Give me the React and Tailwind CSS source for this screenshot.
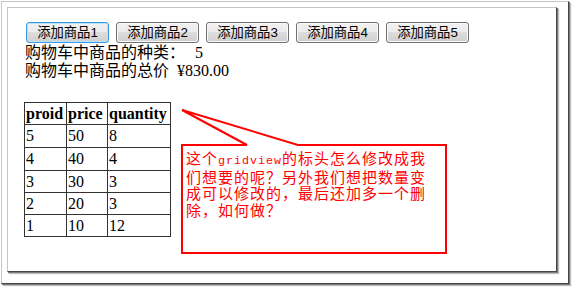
export default function App() {
  const btns = [1, 2, 3, 4, 5];
  const head = ["proid", "price", "quantity"];
  const rows = [
    ["5", "50", "8"],
    ["4", "40", "4"],
    ["3", "30", "3"],
    ["2", "20", "3"],
    ["1", "10", "12"],
  ];
  return (
    <div className="relative w-[572px] h-[287px] bg-white pl-[1px] pt-[1px] overflow-hidden">
      <div className="w-[568px] h-[283px] bg-white border border-[#c6c6c6] border-r-[#444444] border-b-[#444444] shadow-[1px_1px_0_#7a7a7a,2px_2px_1px_#bdbdbd] pl-[5px] pt-[5px]">
        <div className="w-[550px] h-[265px] bg-white border border-[#c6c6c6] border-r-[#444444] border-b-[#444444] shadow-[1px_1px_0_#7a7a7a,2px_2px_1px_#bdbdbd] pl-[16px] pt-[14px]">
          <div className="flex gap-[7px] ml-[2px]">
            {btns.map((n) => (
              <button
                key={n}
                className={
                  n === 1
                    ? "w-[83px] h-[21px] rounded-[3px] border border-[#3c9be0] shadow-[inset_0_0_0_1px_#b8e2f8] bg-[linear-gradient(#f2f2f2_0%,#ebebeb_49%,#dddddd_50%,#cfcfcf_100%)] text-[13.33px] leading-none text-black font-['Liberation_Sans','Noto_Sans_CJK_SC',sans-serif] flex items-center justify-center"
                    : "w-[83px] h-[21px] rounded-[3px] border border-[#707070] shadow-[inset_0_0_0_1px_#fafafa] bg-[linear-gradient(#f2f2f2_0%,#ebebeb_49%,#dddddd_50%,#cfcfcf_100%)] text-[13.33px] leading-none text-black font-['Liberation_Sans','Noto_Sans_CJK_SC',sans-serif] flex items-center justify-center"
                }
              >
                添加商品{n}
              </button>
            ))}
          </div>
          <div className="ml-[1px] mt-[1px] text-[16px] leading-[18px] text-black font-['Liberation_Serif','Noto_Sans_CJK_SC',serif]">
            <div>
              购物车中商品的种类：<span className="ml-[10px]">5</span>
            </div>
            <div>
              购物车中商品的总价<span className="ml-[8px]">¥830.00</span>
            </div>
          </div>
          <div className="mt-[22px] grid grid-cols-[42px_41px_63px] grid-rows-[22px_23px_23px_22px_22px_22px] w-fit border-l border-t border-[#333333] font-['Liberation_Serif',serif] text-[16px] text-black">
            {head.map((h) => (
              <div key={h} className="flex items-center pl-[1px] border-r border-b border-[#333333] font-bold">
                {h}
              </div>
            ))}
            {rows.map((r, i) =>
              r.map((c, j) => (
                <div key={i + "-" + j} className="flex items-center pl-[1px] border-r border-b border-[#333333]">
                  {c}
                </div>
              ))
            )}
          </div>
        </div>
      </div>

      <svg
        className="absolute left-0 top-0 pointer-events-none"
        width="572"
        height="287"
        viewBox="0 0 572 287"
      >
        <path
          d="M182 145 L247 145 L182 110 L298 145 L446 145 L446 253 L182 253 Z"
          fill="white"
          stroke="#ff0000"
          strokeWidth="2"
          strokeLinejoin="miter"
        />
      </svg>

      <div className="absolute left-[186px] top-[151px] text-[15px] leading-[16.7px] tracking-[1px] text-[#ff0000] font-['Liberation_Serif','Noto_Sans_CJK_SC',serif] whitespace-nowrap">
        <div>
          这个<span className="font-['Liberation_Mono',monospace] text-[11.67px]">gridview</span>的标头怎么修改成我
        </div>
        <div>们想要的呢？另外我们想把数量变</div>
        <div>成可以修改的，最后还加多一个删</div>
        <div>除，如何做？</div>
      </div>
    </div>
  );
}
